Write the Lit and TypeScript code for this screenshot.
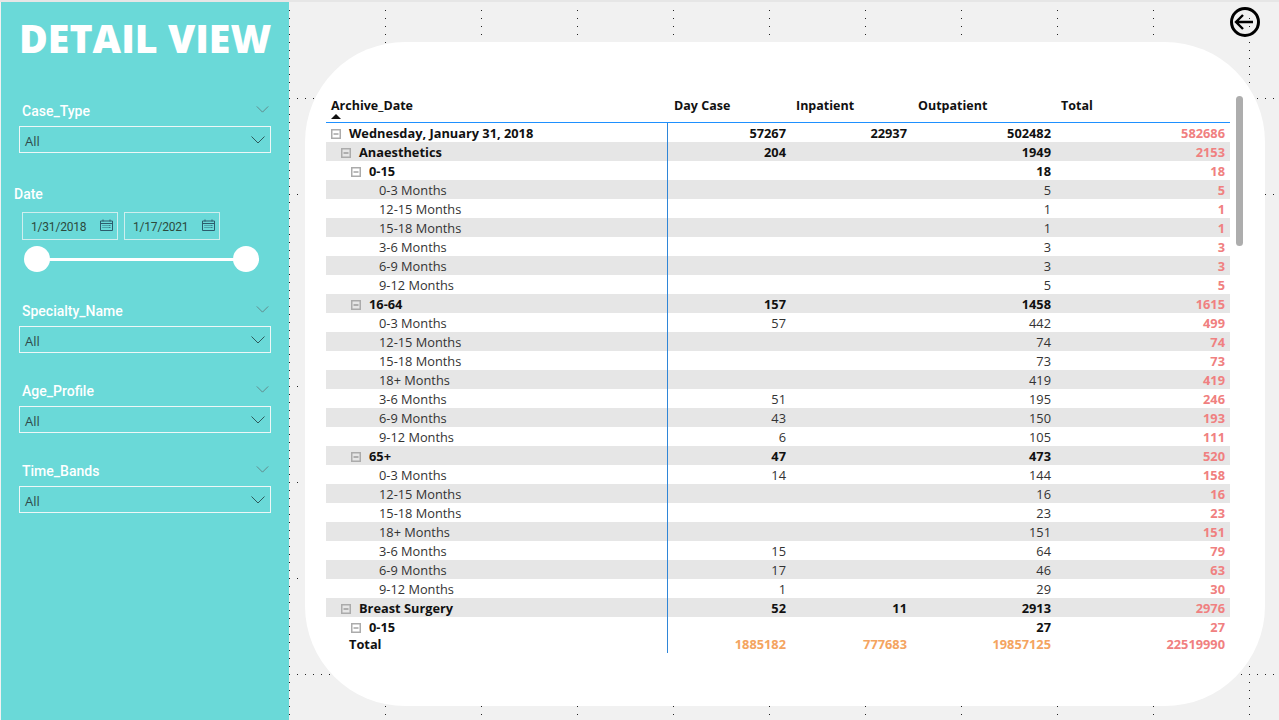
import { LitElement, html, css, svg } from "lit";
import { customElement } from "lit/decorators.js";

type Row = [number, string, string, string, string, string];
const m = (l: string, d: string, i: string, o: string, t: string): Row => [3, l + " Months", d, i, o, t];
const ROWS: Row[] = [
  [0, "Wednesday, January 31, 2018", "57267", "22937", "502482", "582686"],
  [1, "Anaesthetics", "204", "", "1949", "2153"],
  [2, "0-15", "", "", "18", "18"],
  m("0-3", "", "", "5", "5"),
  m("12-15", "", "", "1", "1"),
  m("15-18", "", "", "1", "1"),
  m("3-6", "", "", "3", "3"),
  m("6-9", "", "", "3", "3"),
  m("9-12", "", "", "5", "5"),
  [2, "16-64", "157", "", "1458", "1615"],
  m("0-3", "57", "", "442", "499"),
  m("12-15", "", "", "74", "74"),
  m("15-18", "", "", "73", "73"),
  m("18+", "", "", "419", "419"),
  m("3-6", "51", "", "195", "246"),
  m("6-9", "43", "", "150", "193"),
  m("9-12", "6", "", "105", "111"),
  [2, "65+", "47", "", "473", "520"],
  m("0-3", "14", "", "144", "158"),
  m("12-15", "", "", "16", "16"),
  m("15-18", "", "", "23", "23"),
  m("18+", "", "", "151", "151"),
  m("3-6", "15", "", "64", "79"),
  m("6-9", "17", "", "46", "63"),
  m("9-12", "1", "", "29", "30"),
  [1, "Breast Surgery", "52", "11", "2913", "2976"],
  [2, "0-15", "", "", "27", "27"],
];

const range = (a: number, b: number, s: number) => {
  const out: number[] = [];
  for (let v = a; v <= b; v += s) out.push(v);
  return out;
};
const columns = range(385, 1249, 96);
const DOTS: [number, number][] = [
  ...columns.flatMap((x) => [10, 18, 26, 34].map((y) => [x, y] as [number, number])),
  ...columns.flatMap((x) => [706, 714].map((y) => [x, y] as [number, number])),
  [385, 42],
  ...range(10, 718, 8).map((y) => [289, y] as [number, number]),
  ...[98, 194, 386, 482, 578].map((y) => [297, y] as [number, number]),
  [305, 98], [313, 98],
  ...[297, 305, 313, 321, 329].map((x) => [x, 674] as [number, number]),
  ...[1257, 1265, 1273].map((x) => [x, 98] as [number, number]),
  ...[1265, 1273].map((x) => [x, 194] as [number, number]),
  ...[1241, 1257, 1265, 1273].map((x) => [x, 674] as [number, number]),
  ...[42, 50, 58, 66, 74, 82].map((y) => [1249, y] as [number, number]),
  ...[666, 674, 682, 690, 698].map((y) => [1249, y] as [number, number]),
];

const chevron = (cls: string) => html`<svg class=${cls} viewBox="0 0 14 8"><path d="M.5.5 7 7 13.5.5" fill="none" stroke="currentColor" stroke-width="1"/></svg>`;

const calendar = html`<svg class="cal" viewBox="0 0 13 12"><path d="M.5 2h12v9.5H.5zM.5 4.5h12" fill="none" stroke="#2c5c6c" stroke-width="1"/><path d="M3 .5v2M10 .5v2" stroke="#2c5c6c"/><path d="M2.5 6h8v1h-8zM2.5 8h8v1h-8z" fill="#3a7f8c"/><path d="M4 5.5v4M6 5.5v4M8 5.5v4" stroke="#6ad9d8" stroke-width=".8"/></svg>`;

const minus = html`<svg class="tog" viewBox="0 0 10 10"><rect x=".75" y=".75" width="8.5" height="8.5" fill="none" stroke="#ababab" stroke-width="1.5"/><path d="M2.5 5h5" stroke="#777" stroke-width="1"/></svg>`;

@customElement("app-root")
export class AppRoot extends LitElement {
  static styles = css`
    :host { display: block; width: 1279px; height: 720px; overflow: hidden; }
    .page { position: relative; display: flex; width: 1279px; height: 720px; background: #f1f1f1; box-sizing: border-box; border-top: 2px solid #e6e6e6; padding-left: 1px; }
    .dots { position: absolute; left: 0; top: -2px; width: 1279px; height: 720px; z-index: 0; pointer-events: none; }

    aside { width: 288px; flex: none; background: #6ad9d8; box-sizing: border-box; color: #fff; font-family: Roboto, sans-serif; display: flex; flex-direction: column; padding: 0 18px; position: relative; z-index: 1; }
    h1 { margin: 16px 0 0 0; height: 40px; font: 800 39.3px/40px "Open Sans", sans-serif; color: #fff; white-space: nowrap; letter-spacing: 0; }
    .slicer { display: flex; flex-direction: column; height: 54px; }
    .s1 { margin-top: 41px; }
    .s3 { margin-top: 27px; }
    .s4, .s5 { margin-top: 26px; }
    .shead { display: flex; justify-content: space-between; align-items: center; padding: 0 2px 3px 3px; height: 27px; box-sizing: border-box; font-size: 14px; font-weight: 500; }
    .shead svg { color: #5f7f80; }
    .chev-s { width: 13px; height: 7px; margin-bottom: 4px; }
    .box { display: flex; align-items: center; justify-content: space-between; height: 27px; box-sizing: border-box; border: 1px solid #eef7f7; padding: 0 5px; font: 13px "Open Sans", sans-serif; color: #2e4a4a; width: 252px; }
    .box span { padding-top: 2px; }
    .chev-b { width: 14px; height: 8px; color: #2e5a5c; }

    .date { margin-top: 32px; display: flex; flex-direction: column; }
    .dlabel { font-size: 14px; font-weight: 500; margin-left: -5px; height: 18px; line-height: 18px; }
    .inputs { display: flex; gap: 6px; margin: 9px 0 0 3px; }
    .input { width: 96px; height: 28px; box-sizing: border-box; border: 1px solid #cfeeee; display: flex; align-items: center; justify-content: space-between; padding: 0 4px 0 8px; font-size: 12px; letter-spacing: -.2px; color: #2c4a3c; }
    .input span { padding-top: 2px; }
    .cal { width: 13px; height: 12px; margin-bottom: 3px; }
    .slider { position: relative; height: 26px; margin: 6px 0 0 5px; width: 236px; display: flex; align-items: center; }
    .track { height: 3px; flex: 1; margin: 0 1px 0 14px; background: #fff; }
    .thumb { position: absolute; top: 0; width: 26px; height: 26px; border-radius: 50%; background: #fff; }
    .t1 { left: 0; }
    .t2 { left: 209px; }

    main { flex: 1; display: flex; padding: 40px 14px 14px 16px; min-width: 0; position: relative; }
    .card { flex: 1; background: #fff; border-radius: 100px; padding: 50px 35px 0 21px; position: relative; z-index: 1; }
    .grid { display: grid; grid-template-columns: 342px 123px 121px 144px 174px; font: 12.8px "Open Sans", sans-serif; color: #333; }
    .hrow, .row, .total { display: contents; }
    .hc { height: 30px; line-height: 28px; border-bottom: 1px solid #1e90ff; font-size: 12.5px; font-weight: 700; color: #111; padding-left: 5px; position: relative; }
    .hc:nth-child(2), .hc:nth-child(4) { padding-left: 6px; }
    .sort { position: absolute; left: 5px; bottom: 3px; width: 0; height: 0; border: 5px solid transparent; border-top: 0; border-bottom: 5px solid #111; }
    .c { box-sizing: border-box; height: 19px; line-height: 19px; text-align: right; padding: 1px 5px 0 0; white-space: nowrap; }
    .name { display: flex; align-items: flex-start; text-align: left; }
    .gray .c { background: #e6e6e6; }
    .b .c { font-weight: 700; color: #111; }
    .sum { color: #f08080; font-weight: 700; }
    .b .c.sum { color: #f08080; }
    .total .c { height: 16px; line-height: 14px; font-weight: 700; color: #f4a460; }
    .total .c.name { color: #111; padding-left: 23px; }
    .total .c.sum { color: #f08080; }
    .tog { width: 10px; height: 10px; margin: 5px 8px 0 0; flex: none; }
    .rule { position: absolute; left: 362px; top: 81px; width: 1px; height: 530px; background: #2f86d8; }
    .scroll { position: absolute; left: 931px; top: 54px; width: 7px; height: 150px; border-radius: 3.5px; background: #adadad; }
    .back { position: absolute; left: 1229px; top: 4px; width: 32px; height: 32px; z-index: 3; }
  `;

  private slicer(name: string, cls: string) {
    return html`<div class="slicer ${cls}">
      <div class="shead"><span>${name}</span>${chevron("chev-s")}</div>
      <div class="box"><span>All</span>${chevron("chev-b")}</div>
    </div>`;
  }

  render() {
    return html`<div class="page">
      <svg class="dots" viewBox="0 0 1279 720">
        ${DOTS.map(([x, y]) => svg`<rect x=${x} y=${y} width="1" height="1" fill="#222"/>`)}
      </svg>
      <aside>
        <h1>DETAIL VIEW</h1>
        ${this.slicer("Case_Type", "s1")}
        <div class="date">
          <div class="dlabel">Date</div>
          <div class="inputs">
            <div class="input"><span>1/31/2018</span>${calendar}</div>
            <div class="input"><span>1/17/2021</span>${calendar}</div>
          </div>
          <div class="slider">
            <div class="track"></div>
            <div class="thumb t1"></div>
            <div class="thumb t2"></div>
          </div>
        </div>
        ${this.slicer("Specialty_Name", "s3")}
        ${this.slicer("Age_Profile", "s4")}
        ${this.slicer("Time_Bands", "s5")}
      </aside>
      <main>
        <div class="card">
          <div class="grid">
            <div class="hrow">
              <div class="hc first">Archive_Date<span class="sort"></span></div>
              <div class="hc">Day Case</div>
              <div class="hc">Inpatient</div>
              <div class="hc">Outpatient</div>
              <div class="hc">Total</div>
            </div>
            ${ROWS.map(([lvl, label, d, i, o, t], idx) => html`
              <div class="row ${idx % 2 ? "gray" : ""} ${lvl < 3 ? "b" : ""}">
                <div class="c name" style="padding-left:${lvl === 3 ? 53 : 5 + lvl * 10}px">${lvl < 3 ? minus : ""}<span>${label}</span></div>
                <div class="c">${d}</div>
                <div class="c">${i}</div>
                <div class="c">${o}</div>
                <div class="c sum">${t}</div>
              </div>`)}
            <div class="total">
              <div class="c name">Total</div>
              <div class="c">1885182</div>
              <div class="c">777683</div>
              <div class="c">19857125</div>
              <div class="c sum">22519990</div>
            </div>
          </div>
          <div class="rule"></div>
          <div class="scroll"></div>
        </div>
      </main>
      <svg class="back" viewBox="0 0 32 32">
        <circle cx="16" cy="16" r="13.5" fill="none" stroke="#000" stroke-width="3"/>
        <path d="M24 16H7M14 9l-7 7 7 7" fill="none" stroke="#000" stroke-width="2.4"/>
      </svg>
    </div>`;
  }
}
